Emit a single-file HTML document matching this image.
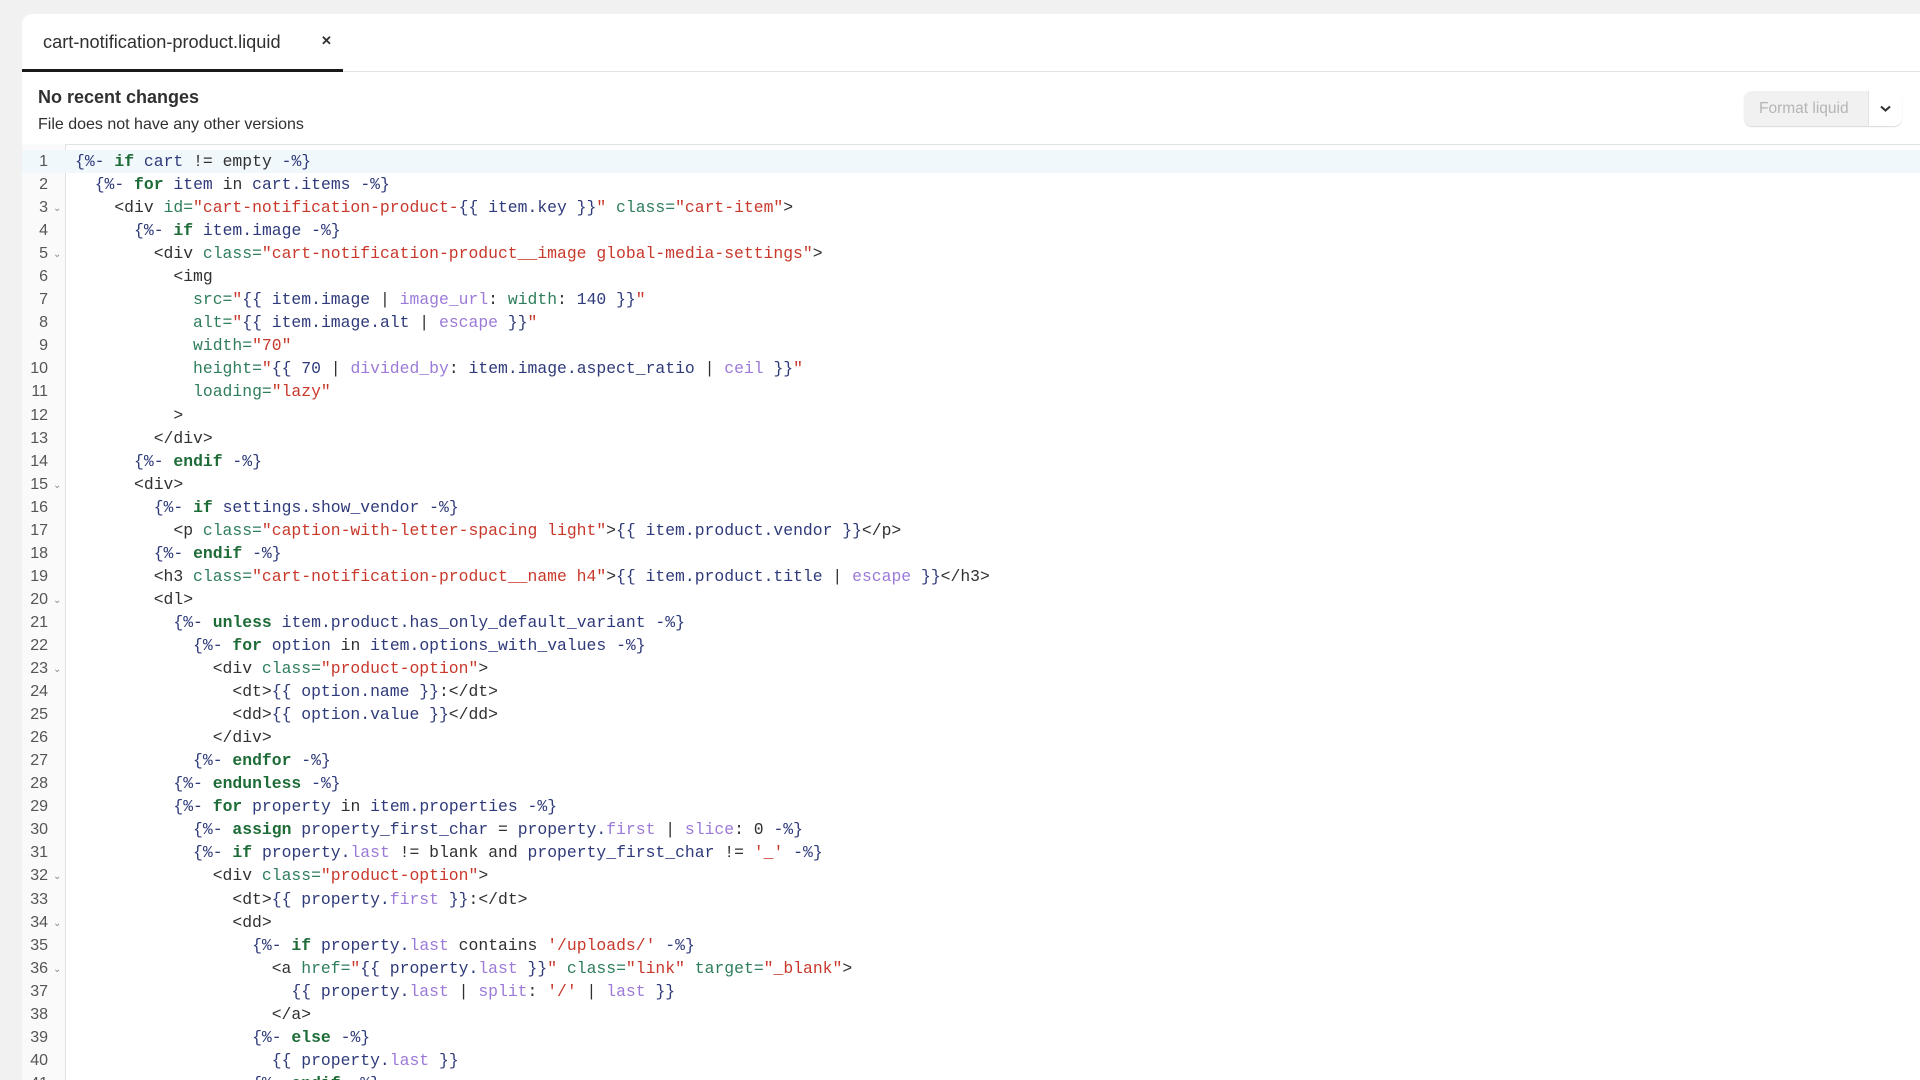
<!DOCTYPE html>
<html><head><meta charset="utf-8"><style>
html,body{margin:0;width:1920px;height:1080px;overflow:hidden}
body{background:#f1f1f1;font-family:"Liberation Sans",sans-serif;position:relative}
.card{position:absolute;left:22px;top:14px;width:1898px;height:1066px;background:#fff;border-radius:10px 0 0 0;overflow:hidden}
.tabs{height:57px;border-bottom:1px solid #e3e3e3;position:relative}
.tab{position:absolute;left:0;top:0;width:321px;height:55px;border-bottom:3px solid #1a1a1a}
.tab span{position:absolute;left:21px;top:18px;font-size:18.2px;color:#303030}
.tab b{position:absolute;left:299px;top:19px;font-size:13px;color:#303030}
.hdr{height:72px;border-bottom:1px solid #e3e3e3;position:relative}
.hdr h1{margin:0;position:absolute;left:16px;top:15px;font-size:18px;font-weight:600;color:#303030}
.hdr p{margin:0;position:absolute;left:16px;top:44px;font-size:16px;color:#303030}
.btn{position:absolute;left:1722px;top:19px;width:158px;height:35px;border-radius:8px;background:#f1f1f1;overflow:hidden;box-shadow:0 1px 1px rgba(0,0,0,.15)}
.btn span{position:absolute;left:15px;top:9px;font-size:15.5px;color:#b5b5b5}
.btn i{position:absolute;right:0;top:0;width:33px;height:35px;background:#fff;border-left:1px solid #e3e3e3}
.gut{position:absolute;left:0;top:130px;width:43px;height:1000px;border-right:1px solid #e0e0e0;background:#fafafa}
.code{position:absolute;left:0;top:136px;font-family:"Liberation Mono",monospace;font-size:16.4px;line-height:23.05px;color:#303030}
.l{position:relative;height:23.05px;white-space:pre}
.l.h{background:#f0f8fc;width:1920px}
.n{position:absolute;left:0;width:26px;text-align:right;color:#555;font-family:"Liberation Sans",sans-serif;font-size:16px}
.fo{position:absolute;left:31px;top:1px;color:#888;font-size:10px;font-family:"Liberation Sans",sans-serif}
.c{position:absolute;left:53px}
.k{color:#1d6b36;font-weight:bold}.v{color:#2f3a7a}.s{color:#c8382b}.a{color:#2e7d5b}.f{color:#9b7ad8}
</style></head><body>
<div class="card">
<div class="tabs"><div class="tab"><span>cart-notification-product.liquid</span><b>✕</b></div></div>
<div class="hdr"><h1>No recent changes</h1><p>File does not have any other versions</p>
<div class="btn"><span>Format liquid</span><i><svg width="33" height="35"><path d="M12 15.5l4.5 4 4.5-4" stroke="#303030" stroke-width="2" fill="none"/></svg></i></div></div>
<div class="gut"></div>
<div class="code">
<div class="l h"><span class="n">1</span><span class="c"><span class="v">{%-</span> <span class="k">if</span> <span class="v">cart</span> != empty <span class="v">-%}</span></span></div>
<div class="l"><span class="n">2</span><span class="c">  <span class="v">{%-</span> <span class="k">for</span> <span class="v">item</span> in <span class="v">cart.items</span> <span class="v">-%}</span></span></div>
<div class="l"><span class="n">3</span><span class="fo">⌄</span><span class="c">    &lt;div <span class="a">id=</span><span class="s">"cart-notification-product-</span><span class="v">{{ item.key }}</span><span class="s">"</span> <span class="a">class=</span><span class="s">"cart-item"</span>&gt;</span></div>
<div class="l"><span class="n">4</span><span class="c">      <span class="v">{%-</span> <span class="k">if</span> <span class="v">item.image</span> <span class="v">-%}</span></span></div>
<div class="l"><span class="n">5</span><span class="fo">⌄</span><span class="c">        &lt;div <span class="a">class=</span><span class="s">"cart-notification-product__image global-media-settings"</span>&gt;</span></div>
<div class="l"><span class="n">6</span><span class="c">          &lt;img</span></div>
<div class="l"><span class="n">7</span><span class="c">            <span class="a">src=</span><span class="s">"</span><span class="v">{{ item.image</span> | <span class="f">image_url</span>: <span class="a">width</span>: <span class="v">140 }}</span><span class="s">"</span></span></div>
<div class="l"><span class="n">8</span><span class="c">            <span class="a">alt=</span><span class="s">"</span><span class="v">{{ item.image.alt</span> | <span class="f">escape</span> <span class="v">}}</span><span class="s">"</span></span></div>
<div class="l"><span class="n">9</span><span class="c">            <span class="a">width=</span><span class="s">"70"</span></span></div>
<div class="l"><span class="n">10</span><span class="c">            <span class="a">height=</span><span class="s">"</span><span class="v">{{ 70</span> | <span class="f">divided_by</span>: <span class="v">item.image.aspect_ratio</span> | <span class="f">ceil</span> <span class="v">}}</span><span class="s">"</span></span></div>
<div class="l"><span class="n">11</span><span class="c">            <span class="a">loading=</span><span class="s">"lazy"</span></span></div>
<div class="l"><span class="n">12</span><span class="c">          &gt;</span></div>
<div class="l"><span class="n">13</span><span class="c">        &lt;/div&gt;</span></div>
<div class="l"><span class="n">14</span><span class="c">      <span class="v">{%-</span> <span class="k">endif</span> <span class="v">-%}</span></span></div>
<div class="l"><span class="n">15</span><span class="fo">⌄</span><span class="c">      &lt;div&gt;</span></div>
<div class="l"><span class="n">16</span><span class="c">        <span class="v">{%-</span> <span class="k">if</span> <span class="v">settings.show_vendor</span> <span class="v">-%}</span></span></div>
<div class="l"><span class="n">17</span><span class="c">          &lt;p <span class="a">class=</span><span class="s">"caption-with-letter-spacing light"</span>&gt;<span class="v">{{ item.product.vendor }}</span>&lt;/p&gt;</span></div>
<div class="l"><span class="n">18</span><span class="c">        <span class="v">{%-</span> <span class="k">endif</span> <span class="v">-%}</span></span></div>
<div class="l"><span class="n">19</span><span class="c">        &lt;h3 <span class="a">class=</span><span class="s">"cart-notification-product__name h4"</span>&gt;<span class="v">{{ item.product.title</span> | <span class="f">escape</span> <span class="v">}}</span>&lt;/h3&gt;</span></div>
<div class="l"><span class="n">20</span><span class="fo">⌄</span><span class="c">        &lt;dl&gt;</span></div>
<div class="l"><span class="n">21</span><span class="c">          <span class="v">{%-</span> <span class="k">unless</span> <span class="v">item.product.has_only_default_variant</span> <span class="v">-%}</span></span></div>
<div class="l"><span class="n">22</span><span class="c">            <span class="v">{%-</span> <span class="k">for</span> <span class="v">option</span> in <span class="v">item.options_with_values</span> <span class="v">-%}</span></span></div>
<div class="l"><span class="n">23</span><span class="fo">⌄</span><span class="c">              &lt;div <span class="a">class=</span><span class="s">"product-option"</span>&gt;</span></div>
<div class="l"><span class="n">24</span><span class="c">                &lt;dt&gt;<span class="v">{{ option.name }}</span>:&lt;/dt&gt;</span></div>
<div class="l"><span class="n">25</span><span class="c">                &lt;dd&gt;<span class="v">{{ option.value }}</span>&lt;/dd&gt;</span></div>
<div class="l"><span class="n">26</span><span class="c">              &lt;/div&gt;</span></div>
<div class="l"><span class="n">27</span><span class="c">            <span class="v">{%-</span> <span class="k">endfor</span> <span class="v">-%}</span></span></div>
<div class="l"><span class="n">28</span><span class="c">          <span class="v">{%-</span> <span class="k">endunless</span> <span class="v">-%}</span></span></div>
<div class="l"><span class="n">29</span><span class="c">          <span class="v">{%-</span> <span class="k">for</span> <span class="v">property</span> in <span class="v">item.properties</span> <span class="v">-%}</span></span></div>
<div class="l"><span class="n">30</span><span class="c">            <span class="v">{%-</span> <span class="k">assign</span> <span class="v">property_first_char</span> = <span class="v">property.</span><span class="f">first</span> | <span class="f">slice</span>: 0 <span class="v">-%}</span></span></div>
<div class="l"><span class="n">31</span><span class="c">            <span class="v">{%-</span> <span class="k">if</span> <span class="v">property.</span><span class="f">last</span> != blank and <span class="v">property_first_char</span> != <span class="s">'_'</span> <span class="v">-%}</span></span></div>
<div class="l"><span class="n">32</span><span class="fo">⌄</span><span class="c">              &lt;div <span class="a">class=</span><span class="s">"product-option"</span>&gt;</span></div>
<div class="l"><span class="n">33</span><span class="c">                &lt;dt&gt;<span class="v">{{ property.</span><span class="f">first</span> <span class="v">}}</span>:&lt;/dt&gt;</span></div>
<div class="l"><span class="n">34</span><span class="fo">⌄</span><span class="c">                &lt;dd&gt;</span></div>
<div class="l"><span class="n">35</span><span class="c">                  <span class="v">{%-</span> <span class="k">if</span> <span class="v">property.</span><span class="f">last</span> contains <span class="s">'/uploads/'</span> <span class="v">-%}</span></span></div>
<div class="l"><span class="n">36</span><span class="fo">⌄</span><span class="c">                    &lt;a <span class="a">href=</span><span class="s">"</span><span class="v">{{ property.</span><span class="f">last</span> <span class="v">}}</span><span class="s">"</span> <span class="a">class=</span><span class="s">"link"</span> <span class="a">target=</span><span class="s">"_blank"</span>&gt;</span></div>
<div class="l"><span class="n">37</span><span class="c">                      <span class="v">{{ property.</span><span class="f">last</span> | <span class="f">split</span>: <span class="s">'/'</span> | <span class="f">last</span> <span class="v">}}</span></span></div>
<div class="l"><span class="n">38</span><span class="c">                    &lt;/a&gt;</span></div>
<div class="l"><span class="n">39</span><span class="c">                  <span class="v">{%-</span> <span class="k">else</span> <span class="v">-%}</span></span></div>
<div class="l"><span class="n">40</span><span class="c">                    <span class="v">{{ property.</span><span class="f">last</span> <span class="v">}}</span></span></div>
<div class="l"><span class="n">41</span><span class="c">                  <span class="v">{%-</span> <span class="k">endif</span> <span class="v">-%}</span></span></div>
</div>
</div>
</body></html>
